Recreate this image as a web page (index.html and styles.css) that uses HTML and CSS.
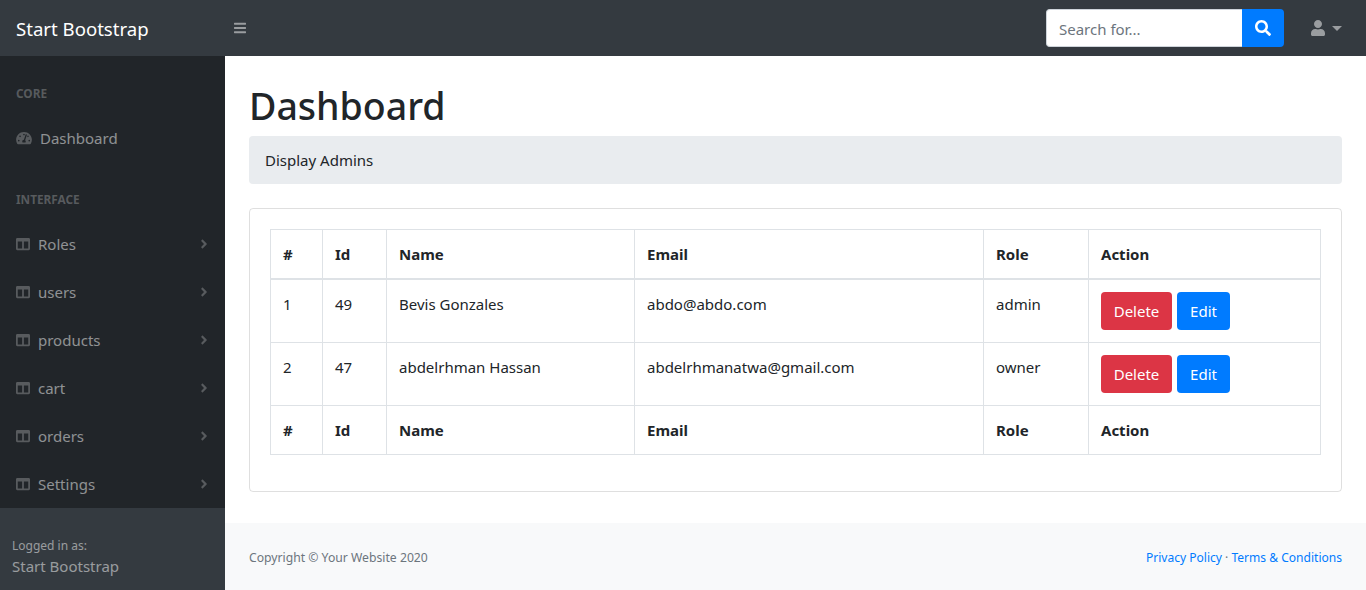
FILE: index.html
```html
<!DOCTYPE html>
<html lang="en">
<head>
<meta charset="utf-8">
<title>Dashboard</title>
<link rel="stylesheet" href="styles.css">
</head>
<body>
<svg class="sprite" aria-hidden="true">
  <symbol id="i-search" viewBox="0 0 512 512"><path d="M505 442.7L405.3 343c-4.5-4.5-10.6-7-17-7H372c27.6-35.3 44-79.7 44-128C416 93.1 322.9 0 208 0S0 93.1 0 208s93.1 208 208 208c48.3 0 92.7-16.4 128-44v16.3c0 6.4 2.5 12.5 7 17l99.7 99.7c9.4 9.4 24.6 9.4 33.9 0l28.3-28.3c9.4-9.4 9.4-24.6.1-34zM208 336c-70.7 0-128-57.2-128-128 0-70.7 57.2-128 128-128 70.7 0 128 57.2 128 128 0 70.7-57.2 128-128 128z"/></symbol>
  <symbol id="i-user" viewBox="0 0 448 512"><path d="M224 256c70.7 0 128-57.3 128-128S294.7 0 224 0 96 57.3 96 128s57.3 128 128 128zm89.6 32h-16.7c-22.2 10.2-46.9 16-72.9 16s-50.6-5.8-72.9-16h-16.7C60.2 288 0 348.2 0 422.4V464c0 26.5 21.5 48 48 48h352c26.5 0 48-21.5 48-48v-41.6c0-74.2-60.2-134.4-134.4-134.4z"/></symbol>
  <symbol id="i-bars" viewBox="0 0 448 512"><path d="M16 132h416c8.837 0 16-7.163 16-16V76c0-8.837-7.163-16-16-16H16C7.163 60 0 67.163 0 76v40c0 8.837 7.163 16 16 16zm0 160h416c8.837 0 16-7.163 16-16v-40c0-8.837-7.163-16-16-16H16c-8.837 0-16 7.163-16 16v40c0 8.837 7.163 16 16 16zm0 160h416c8.837 0 16-7.163 16-16v-40c0-8.837-7.163-16-16-16H16c-8.837 0-16 7.163-16 16v40c0 8.837 7.163 16 16 16z"/></symbol>
  <symbol id="i-columns" viewBox="0 0 512 512"><path d="M464 32H48C21.49 32 0 53.49 0 80v352c0 26.51 21.49 48 48 48h416c26.51 0 48-21.49 48-48V80c0-26.51-21.49-48-48-48zM224 416H64V160h160v256zm224 0H288V160h160v256z"/></symbol>
  <symbol id="i-angle" viewBox="0 0 256 512"><path d="M224.3 273l-136 136c-9.4 9.4-24.6 9.4-33.9 0l-22.6-22.6c-9.4-9.4-9.4-24.6 0-33.9l96.4-96.4-96.4-96.4c-9.4-9.4-9.4-24.6 0-33.9L54.3 103c9.4-9.4 24.6-9.4 33.9 0l136 136c9.5 9.4 9.5 24.6.1 34z"/></symbol>
  <symbol id="i-gauge" viewBox="0 0 576 512"><path d="M288 32C128.94 32 0 160.94 0 320c0 52.8 14.25 102.26 39.06 144.8 5.61 9.62 16.3 15.2 27.44 15.2h443c11.14 0 21.83-5.58 27.44-15.2C561.75 422.26 576 372.8 576 320c0-159.06-128.94-288-288-288zm0 64c14.71 0 26.58 10.13 30.32 23.65-1.11 2.26-2.64 4.23-3.45 6.67l-9.22 27.67c-5.13 3.49-10.97 6.01-17.64 6.01-17.67 0-32-14.33-32-32S270.33 96 288 96zM96 384c-17.67 0-32-14.33-32-32s14.33-32 32-32 32 14.33 32 32-14.33 32-32 32zm48-160c-17.67 0-32-14.33-32-32s14.33-32 32-32 32 14.33 32 32-14.33 32-32 32zm246.77-72.41l-61.33 184C343.13 347.33 352 364.54 352 384c0 11.72-3.38 22.55-8.88 32H232.88c-5.5-9.45-8.88-20.28-8.88-32 0-33.94 26.5-61.43 59.9-63.59l61.34-184.01c4.17-12.56 17.73-19.45 30.36-15.17 12.57 4.19 19.35 17.79 15.17 30.36zm14.66 57.2l15.52-46.55c3.47-1.29 7.13-2.23 11.05-2.23 17.67 0 32 14.33 32 32s-14.33 32-32 32c-11.38-.01-20.89-6.28-26.57-15.22zM480 384c-17.67 0-32-14.33-32-32s14.33-32 32-32 32 14.33 32 32-14.33 32-32 32z"/></symbol>
</svg>

<nav class="topnav">
  <a class="brand" href="#">Start Bootstrap</a>
  <button class="toggle" type="button" aria-label="Toggle navigation"><svg class="ico-bars"><use href="#i-bars"/></svg></button>
  <form class="search">
    <input class="search-input" type="text" placeholder="Search for...">
    <button class="search-btn" type="button" aria-label="Search"><svg class="ico-search"><use href="#i-search"/></svg></button>
  </form>
  <a class="user" href="#" aria-label="User menu"><svg class="ico-user"><use href="#i-user"/></svg><span class="caret"></span></a>
</nav>

<div class="layout">
  <aside class="sidebar">
    <div class="menu">
      <div class="menu-heading">Core</div>
      <a class="menu-link" href="#"><svg class="ico-gauge"><use href="#i-gauge"/></svg><span class="link-text">Dashboard</span></a>
      <div class="menu-heading">Interface</div>
      <a class="menu-link" href="#"><svg class="ico-col"><use href="#i-columns"/></svg><span class="link-text">Roles</span><svg class="ico-angle"><use href="#i-angle"/></svg></a>
      <a class="menu-link" href="#"><svg class="ico-col"><use href="#i-columns"/></svg><span class="link-text">users</span><svg class="ico-angle"><use href="#i-angle"/></svg></a>
      <a class="menu-link" href="#"><svg class="ico-col"><use href="#i-columns"/></svg><span class="link-text">products</span><svg class="ico-angle"><use href="#i-angle"/></svg></a>
      <a class="menu-link" href="#"><svg class="ico-col"><use href="#i-columns"/></svg><span class="link-text">cart</span><svg class="ico-angle"><use href="#i-angle"/></svg></a>
      <a class="menu-link" href="#"><svg class="ico-col"><use href="#i-columns"/></svg><span class="link-text">orders</span><svg class="ico-angle"><use href="#i-angle"/></svg></a>
      <a class="menu-link" href="#"><svg class="ico-col"><use href="#i-columns"/></svg><span class="link-text">Settings</span><svg class="ico-angle"><use href="#i-angle"/></svg></a>
    </div>
    <div class="side-footer">
      <div class="side-small">Logged in as:</div>
      <div class="side-name">Start Bootstrap</div>
    </div>
  </aside>

  <div class="content">
    <main class="main">
      <h1 class="title">Dashboard</h1>
      <div class="crumb">Display Admins</div>
      <section class="card">
        <table class="table">
          <colgroup>
            <col class="c1"><col class="c2"><col class="c3"><col class="c4"><col class="c5"><col class="c6">
          </colgroup>
          <thead>
            <tr><th>#</th><th>Id</th><th>Name</th><th>Email</th><th>Role</th><th>Action</th></tr>
          </thead>
          <tbody>
            <tr>
              <td>1</td><td>49</td><td>Bevis Gonzales</td><td>abdo@abdo.com</td><td>admin</td>
              <td class="actions"><a class="btn btn-red" href="#">Delete</a><a class="btn btn-blue" href="#">Edit</a></td>
            </tr>
            <tr>
              <td>2</td><td>47</td><td>abdelrhman Hassan</td><td>abdelrhmanatwa@gmail.com</td><td>owner</td>
              <td class="actions"><a class="btn btn-red" href="#">Delete</a><a class="btn btn-blue" href="#">Edit</a></td>
            </tr>
          </tbody>
          <tfoot>
            <tr><th>#</th><th>Id</th><th>Name</th><th>Email</th><th>Role</th><th>Action</th></tr>
          </tfoot>
        </table>
      </section>
    </main>
    <footer class="footer">
      <div class="copy">Copyright © Your Website 2020</div>
      <div class="legal"><a href="#">Privacy Policy</a> · <a href="#">Terms &amp; Conditions</a></div>
    </footer>
  </div>
</div>
</body>
</html>
```
FILE: styles.css
```css
* { box-sizing: border-box; }
html, body { height: 100%; }
body {
  margin: 0;
  overflow: hidden;
  font-family: "Noto Sans", "Open Sans", sans-serif;
  font-size: 15px;
  line-height: 24px;
  color: #212529;
  background: #fff;
}
a { text-decoration: none; }
.sprite { display: none; }
svg { fill: currentColor; display: block; flex: none; }

.topnav {
  height: 56px;
  display: flex;
  align-items: center;
  background: #343a40;
}
.brand {
  width: 225px;
  height: 56px;
  padding: 2px 0 0 16px;
  display: flex;
  align-items: center;
  font-size: 18.6px;
  color: #fff;
}
.toggle {
  padding: 0;
  margin-left: 9px;
  border: 0;
  background: none;
  color: rgba(255, 255, 255, .5);
}
.ico-bars { width: 12px; height: 14px; }
.search {
  margin-left: auto;
  display: flex;
  width: 238px;
  height: 38px;
}
.search-input {
  flex: 1;
  min-width: 0;
  padding: 2px 12px 0;
  border: 1px solid #ced4da;
  border-right: 0;
  border-radius: 4px 0 0 4px;
  font: inherit;
  color: #495057;
}
.search-input::placeholder { color: #6c757d; opacity: 1; }
.search-btn {
  width: 42px;
  padding: 0;
  border: 0;
  border-radius: 0 4px 4px 0;
  background: #007bff;
  color: #fff;
  display: flex;
  align-items: center;
  justify-content: center;
}
.ico-search { width: 16px; height: 16px; }
.user {
  width: 82px;
  display: flex;
  align-items: center;
  padding-left: 27px;
  color: rgba(255, 255, 255, .5);
}
.ico-user { width: 14px; height: 16px; }
.caret {
  margin-left: 7px;
  border-top: 5px solid currentColor;
  border-left: 5px solid transparent;
  border-right: 5px solid transparent;
}

.layout { display: flex; height: 534px; }
.sidebar {
  width: 225px;
  flex: none;
  display: flex;
  flex-direction: column;
  background: #212529;
  color: rgba(255, 255, 255, .5);
}
.menu { flex: 1; }
.menu-heading {
  padding: 28px 16px 12px;
  font-size: 11.8px;
  line-height: 18px;
  font-weight: 700;
  text-transform: uppercase;
  color: rgba(255, 255, 255, .25);
}
.menu-link {
  height: 48px;
  display: flex;
  align-items: center;
  padding: 0 16px;
  color: rgba(255, 255, 255, .5);
}
.ico-gauge { width: 16px; height: 14px; color: rgba(255, 255, 255, .25); }
.ico-col { width: 14px; height: 14px; color: rgba(255, 255, 255, .25); }
.link-text { margin-left: 8px; flex: 1; }
.ico-angle { width: 8px; height: 14px; margin-right: 1px; color: rgba(255, 255, 255, .25); }
.side-footer {
  height: 82px;
  padding: 28px 12px 0;
  background: #343a40;
  color: rgba(255, 255, 255, .5);
}
.side-small { font-size: 12px; line-height: 20px; }
.side-name { font-size: 15px; line-height: 20px; }

.content {
  flex: 1;
  min-width: 0;
  display: flex;
  flex-direction: column;
}
.main { flex: 1; padding: 0 24px; }
.title {
  margin: 26px 0 6px;
  font-size: 37.5px;
  line-height: 48px;
  font-weight: 500;
}
.crumb {
  height: 48px;
  padding: 12px 16px;
  margin-bottom: 24px;
  border-radius: 4px;
  background: #e9ecef;
}
.card {
  height: 284px;
  padding: 20px;
  border: 1px solid rgba(0, 0, 0, .125);
  border-radius: 4px;
}
.table {
  width: 1050px;
  table-layout: fixed;
  border-collapse: collapse;
}
.c1 { width: 52px; }
.c2 { width: 64px; }
.c3 { width: 248px; }
.c4 { width: 349px; }
.c5 { width: 105px; }
.c6 { width: 232px; }
.table th, .table td {
  padding: 12px;
  border: 1px solid #dee2e6;
  text-align: left;
  vertical-align: top;
}
.table th { font-weight: 700; }
.table thead th { border-bottom-width: 2px; }
.actions { white-space: nowrap; }
.btn {
  display: inline-block;
  height: 38px;
  padding-top: 7px;
  margin-right: 5px;
  border-radius: 4px;
  color: #fff;
  text-align: center;
}
.btn-red { width: 71px; background: #dc3545; }
.btn-blue { width: 53px; background: #007bff; }

.footer {
  height: 67px;
  flex: none;
  padding: 2px 24px 0;
  display: flex;
  align-items: center;
  justify-content: space-between;
  background: #f8f9fa;
  font-size: 12.05px;
  color: #6c757d;
}
.copy { font-size: 12.2px; }
.legal a { color: #007bff; }
```
